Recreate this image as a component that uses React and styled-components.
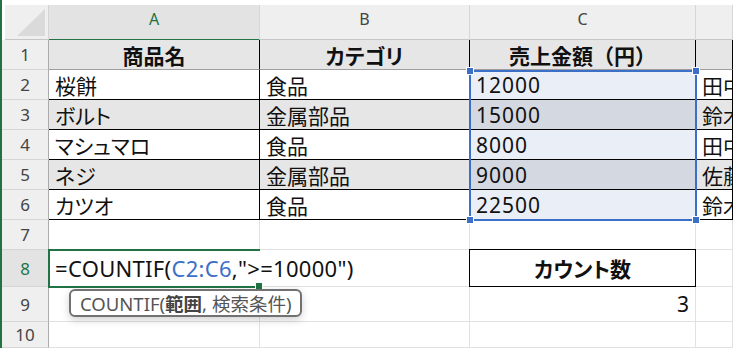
import React from 'react'
import styled, { createGlobalStyle, css } from 'styled-components'

const GlobalStyle = createGlobalStyle`
  html, body {
    margin: 0;
    padding: 0;
    background: #ffffff;
  }
  body {
    font-family: 'Noto Sans CJK JP', 'Noto Sans', sans-serif;
    overflow: hidden;
  }
`

const GREEN = '#217346'
const BLUE = '#3c6fc8'

// every cell sits at an explicit grid position so overlays don't shuffle them
const placed = css`
  grid-row: ${(p) => p.$r};
  grid-column: ${(p) => p.$c};
`

const Window = styled.div`
  display: flex;
  width: 733px;
  height: 348px;
  overflow: hidden;
`

const EdgeBar = styled.div`
  width: 2px;
  flex-shrink: 0;
  background: ${GREEN};
`

const Sheet = styled.div`
  flex: 1;
  display: grid;
  grid-template-columns: 47px 211px 210px 226px 1fr;
  grid-template-rows: 40px repeat(7, 30px) 37px 35px 1fr;
  min-width: 0;
`

const Corner = styled.div`
  grid-row: 1;
  grid-column: 1;
  position: relative;
  margin: 5px 0 0 3px;
  background: #efefef;
  border-right: 1px solid #d4d4d4;
  border-bottom: 1px solid #c6c6c6;
  box-sizing: border-box;
  overflow: hidden;

  &::after {
    content: '';
    position: absolute;
    right: 3px;
    bottom: 3px;
    width: 0;
    height: 0;
    border-left: 28px solid transparent;
    border-bottom: 27px solid #dadada;
  }
`

const ColHeader = styled.div`
  ${placed}
  margin-top: 5px;
  display: flex;
  align-items: center;
  justify-content: center;
  padding-bottom: 7px;
  box-sizing: border-box;
  background: ${(p) => (p.$active ? '#e3e3e3' : '#efefef')};
  border-right: 1px solid #d6d6d6;
  border-bottom: ${(p) => (p.$active ? `2px solid ${GREEN}` : '1px solid #c6c6c6')};
  margin-bottom: ${(p) => (p.$active ? '-1px' : '0')};
  color: ${(p) => (p.$active ? GREEN : '#444')};
  font-family: 'Noto Sans', 'Open Sans', sans-serif;
  font-size: 16px;
`

const RowHeader = styled.div`
  ${placed}
  display: flex;
  align-items: center;
  justify-content: center;
  box-sizing: border-box;
  background: ${(p) => (p.$active ? '#e3e3e3' : '#efefef')};
  border-right: 1px solid #ababab;
  border-bottom: 1px solid #d6d6d6;
  color: ${(p) => (p.$active ? GREEN : '#444')};
  font-family: 'Noto Sans', 'Open Sans', sans-serif;
  font-size: 17px;
`

const Cell = styled.div`
  ${placed}
  display: flex;
  align-items: center;
  justify-content: ${(p) =>
    p.$align === 'center' ? 'center' : p.$align === 'right' ? 'flex-end' : 'flex-start'};
  padding: 0 6px;
  box-sizing: border-box;
  min-width: 0;
  white-space: nowrap;
  overflow: hidden;
  background: ${(p) => p.$bg || 'transparent'};
  border-right: 1px solid ${(p) => p.$line || '#e1e1e1'};
  border-bottom: 1px solid ${(p) => p.$bottom || p.$line || '#e1e1e1'};
  font-size: 21px;
  font-weight: ${(p) => (p.$bold ? 700 : 400)};
  font-feature-settings: ${(p) => (p.$kana ? '"palt"' : 'normal')};
  color: #111;
`

const Num = styled.span`
  font-family: 'Noto Sans', sans-serif;
  font-size: 21px;
  letter-spacing: ${(p) => (p.$tight ? '0' : '1px')};
`

const LabelBox = styled(Cell)`
  margin: -1px 0 0 -1px;
  border: 1px solid #000;
`

const EditCell = styled.div`
  ${placed}
  display: flex;
  align-items: center;
  padding-left: 6px;
  white-space: nowrap;
  border-bottom: 1px solid #e1e1e1;
  font-family: 'Noto Sans', sans-serif;
  font-size: 22px;
  letter-spacing: 0.3px;
  color: #111;
  position: relative;
  z-index: 1;
`

const Ref = styled.span`
  color: ${BLUE};
`

const Caret = styled.span`
  display: inline-block;
  width: 1px;
  align-self: stretch;
  background: #8a8a8a;
  margin: 1px 0;
`

const ActiveFrame = styled.div`
  grid-column: 2;
  grid-row: 9;
  margin: -1px 0 -1px -1px;
  border: 2px solid ${GREEN};
  border-right: none;
  position: relative;
  z-index: 2;
  pointer-events: none;
`

const FillHandle = styled.span`
  position: absolute;
  right: -3px;
  bottom: -4px;
  width: 6px;
  height: 6px;
  background: ${GREEN};
  border: 1px solid #fff;
`

const Selection = styled.div`
  grid-column: 4;
  grid-row: 3 / 8;
  margin: 0 -1px -1px -1px;
  border: 2px solid ${BLUE};
  position: relative;
  z-index: 2;
  pointer-events: none;
`

const Handle = styled.span`
  position: absolute;
  width: 6px;
  height: 6px;
  background: ${BLUE};
  border: 1px solid #fff;
  ${(p) => (p.$top ? 'top: -5px;' : 'bottom: -5px;')}
  ${(p) => (p.$left ? 'left: -5px;' : 'right: -5px;')}
`

const Tooltip = styled.div`
  grid-column: 2 / 4;
  grid-row: 10;
  justify-self: start;
  align-self: start;
  margin: 2px 0 0 20px;
  height: 28px;
  padding: 0 9px;
  display: flex;
  align-items: center;
  box-sizing: border-box;
  background: #fff;
  border: 2px solid #717171;
  border-radius: 6px;
  box-shadow: 0 3px 8px rgba(0, 0, 0, 0.18);
  font-family: 'Noto Sans', 'Noto Sans CJK JP', sans-serif;
  font-size: 18.5px;
  color: #555;
  white-space: nowrap;
  position: relative;
  z-index: 3;

  b {
    font-family: 'Noto Sans CJK JP', sans-serif;
    font-weight: 700;
    color: #444;
  }
  span {
    font-family: 'Noto Sans CJK JP', sans-serif;
  }
`

const rows = [
  ['桜餅', '食品', '12000', '田中'],
  ['ボルト', '金属部品', '15000', '鈴木'],
  ['マシュマロ', '食品', '8000', '田中'],
  ['ネジ', '金属部品', '9000', '佐藤'],
  ['カツオ', '食品', '22500', '鈴木'],
]

const headers = [
  { text: '商品名' },
  { text: 'カテゴリ', kana: true },
  { text: '売上金額（円）' },
  { text: '' },
]

export default function App() {
  return (
    <Window>
      <GlobalStyle />
      <EdgeBar />
      <Sheet>
        <Corner />
        <ColHeader $r={1} $c={2} $active>A</ColHeader>
        <ColHeader $r={1} $c={3}>B</ColHeader>
        <ColHeader $r={1} $c={4}>C</ColHeader>
        <ColHeader $r={1} $c={5} />

        <RowHeader $r={2} $c={1}>1</RowHeader>
        {headers.map((h, i) => (
          <Cell
            key={i}
            $r={2}
            $c={i + 2}
            $align="center"
            $bold
            $kana={h.kana}
            $bg="#e6e6e6"
            $line="#000"
            $bottom="#9e9e9e"
          >
            {h.text}
          </Cell>
        ))}

        {rows.map((r, i) => {
          const row = i + 3
          const banded = i % 2 === 1
          const bg = banded ? '#e6e6e6' : '#ffffff'
          const selBg = banded ? '#d4d8e0' : '#eaeef7'
          return (
            <React.Fragment key={i}>
              <RowHeader $r={row} $c={1}>{i + 2}</RowHeader>
              <Cell $r={row} $c={2} $bg={bg} $line="#000" $kana>{r[0]}</Cell>
              <Cell $r={row} $c={3} $bg={bg} $line="#000">{r[1]}</Cell>
              <Cell $r={row} $c={4} $bg={selBg} $line="#000">
                <Num>{r[2]}</Num>
              </Cell>
              <Cell $r={row} $c={5} $bg={bg} $line="#000">{r[3]}</Cell>
            </React.Fragment>
          )
        })}

        <RowHeader $r={8} $c={1}>7</RowHeader>
        <Cell $r={8} $c={2} />
        <Cell $r={8} $c={3} />
        <Cell $r={8} $c={4} />
        <Cell $r={8} $c={5} />

        <RowHeader $r={9} $c={1} $active>8</RowHeader>
        <EditCell $r={9} $c={2}>
          =COUNTIF(<Caret />
          <Ref>C2:C6</Ref>,"&gt;=10000")
        </EditCell>
        <Cell $r={9} $c={3} />
        <LabelBox $r={9} $c={4} $align="center" $bold $kana>カウント数</LabelBox>
        <Cell $r={9} $c={5} />

        <RowHeader $r={10} $c={1}>9</RowHeader>
        <Cell $r={10} $c={2} />
        <Cell $r={10} $c={3} />
        <Cell $r={10} $c={4} $align="right">
          <Num $tight>3</Num>
        </Cell>
        <Cell $r={10} $c={5} />

        <RowHeader $r={11} $c={1}>10</RowHeader>
        <Cell $r={11} $c={2} />
        <Cell $r={11} $c={3} />
        <Cell $r={11} $c={4} />
        <Cell $r={11} $c={5} />

        <Selection>
          <Handle $top $left />
          <Handle $top />
          <Handle $left />
          <Handle />
        </Selection>

        <ActiveFrame>
          <FillHandle />
        </ActiveFrame>

        <Tooltip>
          COUNTIF(<b>範囲</b>,&nbsp;<span>検索条件</span>)
        </Tooltip>
      </Sheet>
    </Window>
  )
}
